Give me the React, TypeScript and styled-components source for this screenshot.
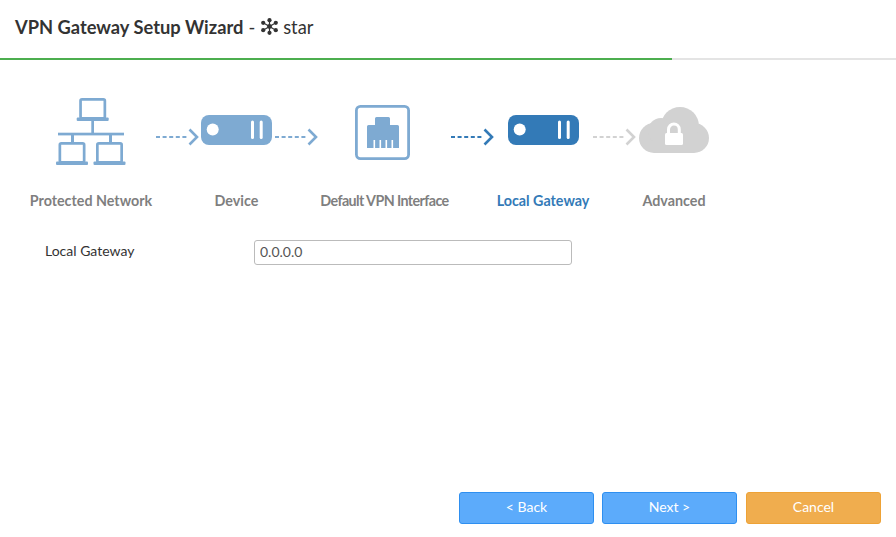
import styled, { createGlobalStyle } from "styled-components"

const GlobalStyle = createGlobalStyle`
    html, body {
        margin: 0;
        padding: 0;
        background: #fff;
        font-family: "Lato", "Open Sans", sans-serif;
    }
    * {
        box-sizing: border-box;
    }
`;

const Page = styled.div`
    display: flex;
    flex-direction: column;
    width: 896px;
    height: 537px;
    overflow: hidden;
    background: #fff;
`;

const Header = styled.div`
    display: flex;
    align-items: center;
    height: 58px;
    padding: 0 15px 5px;
    font-size: 18.3px;
    color: #333;
`;

const HeaderTitle = styled.span`
    font-weight: 700;
`;

const HeaderRest = styled.span`
    display: flex;
    align-items: center;
    margin-left: 5px;
    font-weight: 400;
    svg {
        margin: 0 5px 0 6px;
    }
`;

const Progress = styled.div`
    height: 2px;
    background: #e4e4e4;
`;

const ProgressFill = styled.div`
    height: 2px;
    background: #4cae4f;
`;

const Body = styled.div`
    flex: 1;
    display: flex;
    flex-direction: column;
`;

const IconRow = styled.div`
    display: flex;
    align-items: flex-start;
    height: 75px;
    margin-top: 37px;
    padding-left: 56px;
`;

const Slot = styled.div<{ $left: number; $top: number; $width: number }>`
    display: flex;
    justify-content: center;
    flex: none;
    margin-left: ${(p) => p.$left}px;
    margin-top: ${(p) => p.$top}px;
    width: ${(p) => p.$width}px;
    svg {
        display: block;
    }
`;

const LabelRow = styled.div`
    display: flex;
    margin-top: 20px;
    padding-left: 20px;
`;

const StepLabel = styled.div<{ $width: number; $active?: boolean; $tight?: boolean }>`
    flex: none;
    width: ${(p) => p.$width}px;
    text-align: center;
    font-size: 14.3px;
    line-height: 18px;
    font-weight: 700;
    letter-spacing: ${(p) => (p.$tight ? "-0.6px" : "0")};
    color: ${(p) => (p.$active ? "#337ab7" : "#7f7f7f")};
`;

const FormRow = styled.div`
    display: flex;
    align-items: center;
    margin-top: 30px;
    padding-left: 45px;
`;

const FieldLabel = styled.label`
    width: 209px;
    padding-bottom: 4px;
    font-size: 14px;
    color: #333;
`;

const TextInput = styled.input`
    width: 318px;
    height: 25px;
    padding: 0 5px 3px;
    border: 1px solid #bbb;
    border-radius: 3px;
    font-family: "Lato", sans-serif;
    font-size: 14px;
    color: #555;
    outline: none;
`;

const Footer = styled.div`
    display: flex;
    justify-content: flex-end;
    gap: 8px;
    padding: 0 15px 13px;
`;

const Button = styled.button<{ $cancel?: boolean }>`
    width: 135px;
    height: 32px;
    margin-left: ${(p) => (p.$cancel ? "1px" : "0")};
    padding: 0 0 3px;
    border: 1px solid ${(p) => (p.$cancel ? "#eea236" : "#2e8ff0")};
    border-radius: 3px;
    background: ${(p) => (p.$cancel ? "#f0ad4e" : "#5cabfb")};
    color: #fff;
    font-family: "Lato", sans-serif;
    font-size: 14px;
`;

const BLUE = "#7eaad2";
const DARK = "#337ab7";
const GREY = "#d2d2d2";

const Arrow = ({ color }: { color: string }) => (
    <svg width={43} height={18} viewBox="0 0 43 18" fill="none">
        <line x1={0} y1={9} x2={32} y2={9} stroke={color} strokeWidth={2} strokeDasharray="4 2.6" />
        <path d="M33.5 1.5 L41 9 L33.5 16.5" stroke={color} strokeWidth={2.6} />
    </svg>
);

const Laptop = ({ x, y }: { x: number; y: number }) => (
    <g transform={`translate(${x} ${y})`}>
        <rect x={3.85} y={1.35} width={24.3} height={19} rx={1.5} fill="none" stroke={BLUE} strokeWidth={2.7} />
        <rect x={0} y={19.5} width={32} height={3.5} rx={1} fill={BLUE} />
    </g>
);

const NetworkIcon = () => (
    <svg width={70} height={68} viewBox="0 0 70 68">
        <Laptop x={20.7} y={1} />
        <rect x={35.3} y={24} width={2.7} height={12} fill={BLUE} />
        <rect x={2} y={35.7} width={66} height={2.7} fill={BLUE} />
        <rect x={15} y={38} width={3} height={7} fill={BLUE} />
        <rect x={53} y={38} width={3} height={7} fill={BLUE} />
        <Laptop x={0} y={45} />
        <Laptop x={37.5} y={45} />
    </svg>
);

const DeviceIcon = ({ color }: { color: string }) => (
    <svg width={71} height={30} viewBox="0 0 71 30">
        <rect x={0} y={0} width={71} height={30} rx={8} fill={color} />
        <circle cx={11.7} cy={14.5} r={6} fill="#fff" />
        <rect x={50} y={5.5} width={3} height={18.5} rx={1.5} fill="#fff" />
        <rect x={58.7} y={5.5} width={3} height={18.5} rx={1.5} fill="#fff" />
    </svg>
);

const PortIcon = () => (
    <svg width={55} height={55} viewBox="0 0 55 55">
        <rect x={1.4} y={1.4} width={52.2} height={52.2} rx={4} fill="none" stroke={BLUE} strokeWidth={2.8} />
        <path
            d="M12 21.5 a1.5 1.5 0 0 1 1.5 -1.5 H20 V13.5 a1.5 1.5 0 0 1 1.5 -1.5 H33.5 a1.5 1.5 0 0 1 1.5 1.5 V20 H42.5 a1.5 1.5 0 0 1 1.5 1.5 V43 H12 Z"
            fill={BLUE}
        />
        <g fill="#fff">
            <rect x={18.5} y={35} width={1.6} height={8} />
            <rect x={24.5} y={35} width={1.6} height={8} />
            <rect x={30.5} y={35} width={1.6} height={8} />
            <rect x={36.5} y={35} width={1.6} height={8} />
        </g>
    </svg>
);

const CloudIcon = () => (
    <svg width={70} height={46} viewBox="0 0 70 46">
        <g fill={GREY}>
            <circle cx={15} cy={31} r={15} />
            <circle cx={55} cy={31} r={15} />
            <circle cx={41} cy={19} r={19} />
            <circle cx={22} cy={24} r={13} />
            <rect x={15} y={28} width={40} height={18} />
        </g>
        <path d="M29.5 27 V22.5 a5.4 5.4 0 0 1 10.8 0 V27" fill="none" stroke="#fff" strokeWidth={3} />
        <rect x={26} y={26} width={18} height={12} rx={1.5} fill="#fff" />
    </svg>
);

const StarIcon = () => (
    <svg width={17} height={17} viewBox="0 0 17 17" fill="#333">
        <g stroke="#333" strokeWidth={1.2}>
            <line x1={8.5} y1={2} x2={8.5} y2={15} />
            <line x1={2.2} y1={4.8} x2={14.8} y2={12.2} />
            <line x1={14.8} y1={4.8} x2={2.2} y2={12.2} />
        </g>
        <circle cx={8.5} cy={2.2} r={2.1} />
        <circle cx={8.5} cy={14.8} r={2.1} />
        <circle cx={2.2} cy={4.8} r={2.1} />
        <circle cx={14.8} cy={4.8} r={2.1} />
        <circle cx={2.2} cy={12.2} r={2.1} />
        <circle cx={14.8} cy={12.2} r={2.1} />
        <circle cx={8.5} cy={8.5} r={2.4} />
    </svg>
);

const App = () => {
    return (
        <Page>
            <GlobalStyle />
            <Header>
                <HeaderTitle>VPN Gateway Setup Wizard</HeaderTitle>
                <HeaderRest>
                    - <StarIcon /> star
                </HeaderRest>
            </Header>
            <Progress>
                <ProgressFill style={{ width: `${0.75 * 100}%` }} />
            </Progress>
            <Body>
                <IconRow>
                    <Slot $left={0} $top={0} $width={70}><NetworkIcon /></Slot>
                    <Slot $left={30} $top={31} $width={43}><Arrow color={BLUE} /></Slot>
                    <Slot $left={2} $top={18} $width={71}><DeviceIcon color={BLUE} /></Slot>
                    <Slot $left={3} $top={31} $width={43}><Arrow color={BLUE} /></Slot>
                    <Slot $left={37} $top={8} $width={55}><PortIcon /></Slot>
                    <Slot $left={41} $top={31} $width={43}><Arrow color={DARK} /></Slot>
                    <Slot $left={14} $top={18} $width={71}><DeviceIcon color={DARK} /></Slot>
                    <Slot $left={14} $top={31} $width={43}><Arrow color={GREY} /></Slot>
                    <Slot $left={3} $top={10} $width={70}><CloudIcon /></Slot>
                </IconRow>
                <LabelRow>
                    <StepLabel $width={142}>Protected Network</StepLabel>
                    <StepLabel $width={149}>Device</StepLabel>
                    <StepLabel $width={147} $tight>Default VPN Interface</StepLabel>
                    <StepLabel $width={170} $active>Local Gateway</StepLabel>
                    <StepLabel $width={92}>Advanced</StepLabel>
                </LabelRow>
                <FormRow>
                    <FieldLabel>Local Gateway</FieldLabel>
                    <TextInput defaultValue="0.0.0.0" />
                </FormRow>
            </Body>
            <Footer>
                <Button>&lt; Back</Button>
                <Button>Next &gt;</Button>
                <Button $cancel>Cancel</Button>
            </Footer>
        </Page>
    )
}

export default App;
